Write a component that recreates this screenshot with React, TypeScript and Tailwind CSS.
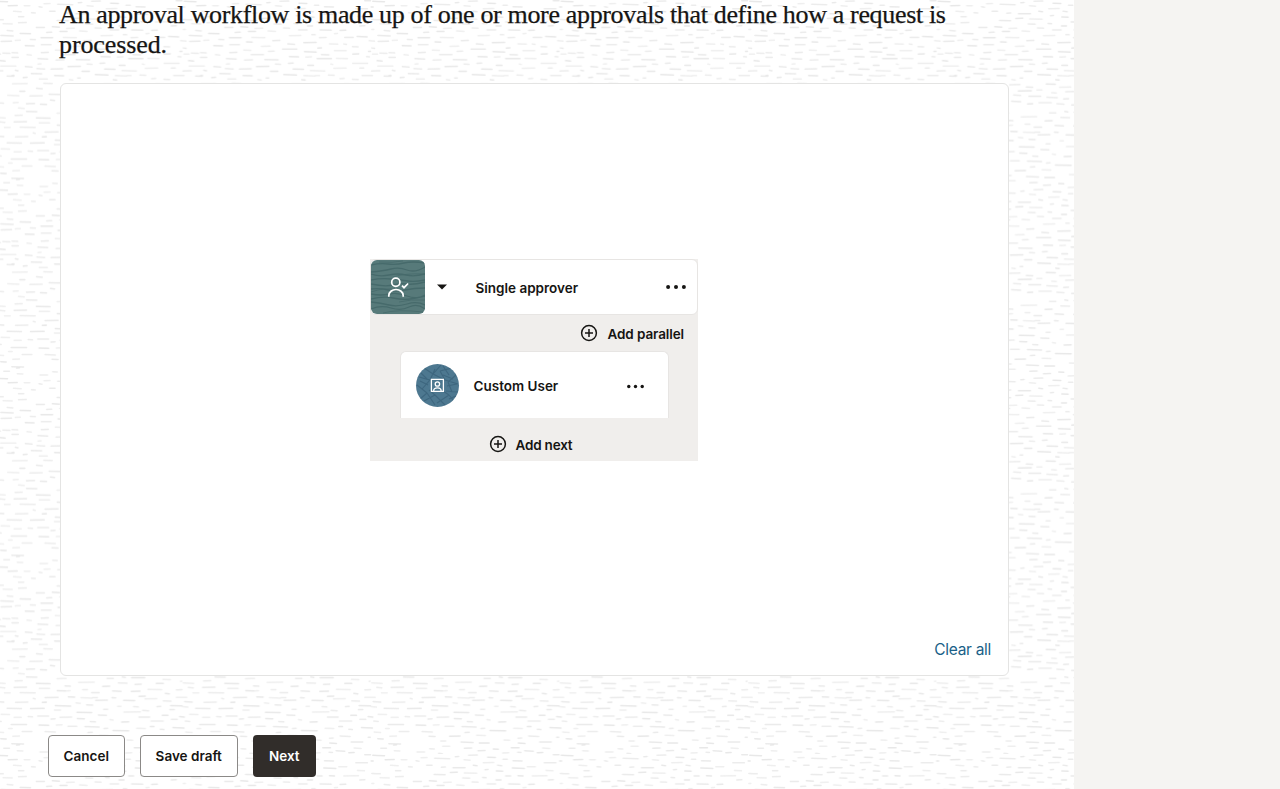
const TILE = 188.5;

type Dash = [x: number, width: number, y: number];

type Patch = { left: number; top: number; dashes: Dash[] };

// Dash coordinates are in thirds of a pixel, relative to the patch origin.
const patches: Patch[] = [
  {
    left: 600,
    top: 674,
    dashes: [
      [66, 30, 14], [216, 22, 13], [262, 12, 9], [290, 42, 11], [384, 25, 16], [506, 24, 21], [540, 34, 9],
      [4, 44, 28], [131, 50, 25], [250, 29, 27], [300, 22, 31], [364, 24, 28], [445, 34, 27], [437, 6, 22],
      [90, 19, 36], [203, 24, 37], [13, 34, 43], [460, 18, 40], [503, 40, 40],
      [67, 28, 50], [95, 13, 51], [143, 17, 47], [233, 28, 51], [289, 29, 52], [339, 44, 46], [424, 20, 48],
      [170, 25, 56], [391, 15, 58], [474, 20, 57], [521, 48, 56],
      [30, 42, 71], [100, 22, 69], [138, 36, 71], [173, 17, 71], [231, 14, 71], [312, 22, 67], [424, 34, 70], [560, 9, 73],
      [182, 38, 79], [266, 36, 79], [330, 38, 75], [385, 26, 81], [449, 26, 83],
      [22, 15, 85], [123, 16, 87], [507, 40, 85], [155, 21, 93],
      [61, 49, 95], [248, 13, 97], [296, 17, 98], [366, 14, 98], [407, 37, 95], [443, 19, 98],
      [206, 15, 106], [482, 46, 103], [552, 44, 104], [58, 22, 108], [323, 21, 109], [405, 16, 107],
      [126, 47, 115], [267, 52, 114],
      [8, 36, 126], [190, 27, 123], [382, 20, 124], [464, 28, 121],
      [75, 38, 130], [312, 35, 129], [434, 17, 128], [503, 24, 130], [545, 16, 128],
      [48, 15, 135], [127, 24, 134], [225, 12, 137], [409, 21, 136],
      [166, 18, 143], [260, 24, 144], [348, 40, 141], [451, 16, 141], [494, 49, 152],
      [12, 32, 153], [64, 20, 153], [99, 29, 157], [150, 45, 158], [346, 14, 158],
      [305, 29, 163], [207, 14, 164], [376, 14, 166], [414, 36, 161], [486, 14, 164],
      [30, 34, 173], [159, 16, 176], [234, 50, 170], [452, 22, 174], [527, 32, 173],
      [51, 21, 187], [113, 34, 187], [194, 29, 184], [350, 33, 186], [434, 9, 190], [463, 19, 194], [499, 23, 187],
      [86, 18, 201], [147, 39, 204], [202, 32, 207], [276, 20, 198], [318, 14, 193], [383, 38, 204], [319, 23, 207],
      [92, 24, 217], [53, 17, 224], [157, 25, 223], [298, 26, 221], [392, 24, 222], [472, 20, 223], [496, 38, 209], [510, 12, 213],
      [15, 26, 234], [80, 14, 238], [198, 24, 230], [244, 18, 225], [272, 21, 237], [317, 13, 235], [338, 29, 230], [376, 19, 236], [512, 20, 230],
      [170, 29, 244], [424, 20, 242], [448, 38, 244],
      [27, 21, 251], [68, 48, 253], [130, 13, 248], [227, 26, 250], [156, 21, 257], [273, 16, 256], [303, 30, 260], [485, 30, 257], [533, 20, 257],
      [12, 12, 260], [44, 19, 274], [184, 14, 274], [214, 34, 266], [397, 38, 266], [257, 15, 274], [443, 9, 261], [501, 26, 274],
      [88, 15, 280], [123, 39, 281], [301, 39, 282], [346, 27, 278], [555, 14, 278],
      [219, 12, 287], [253, 22, 291], [402, 24, 289], [516, 19, 290],
      [66, 36, 301], [115, 24, 295], [157, 40, 297], [445, 28, 298], [281, 18, 306], [318, 18, 305], [361, 47, 306],
      [152, 24, 312], [212, 13, 310], [252, 18, 318], [470, 30, 311], [516, 26, 308],
      [4, 27, 322], [52, 24, 320], [95, 26, 325], [180, 21, 324], [409, 18, 318],
      [75, 24, 334], [134, 25, 333], [225, 29, 330], [290, 36, 330], [350, 20, 331], [445, 9, 328], [482, 20, 331],
      [35, 18, 337], [521, 34, 340], [333, 12, 341],
    ],
  },
  {
    left: 200,
    top: 26,
    dashes: [
      [267, 37, 29], [334, 13, 26], [532, 40, 28],
      [87, 38, 35], [154, 42, 34], [357, 23, 35], [433, 28, 34], [470, 33, 31],
      [10, 18, 43], [55, 18, 40], [217, 24, 44], [138, 20, 48], [506, 19, 44],
      [88, 32, 56], [262, 23, 54], [310, 40, 50], [387, 28, 54], [430, 11, 54], [533, 34, 46],
      [40, 29, 59], [183, 29, 61], [456, 20, 62], [514, 11, 66], [352, 14, 66],
      [130, 24, 72], [204, 20, 76], [246, 46, 69], [312, 38, 77], [402, 38, 74],
      [0, 20, 80], [88, 24, 80], [504, 9, 76], [45, 16, 86], [152, 40, 86], [363, 25, 86], [457, 21, 84], [516, 18, 84], [538, 24, 81],
      [0, 22, 94], [267, 30, 92], [316, 20, 93], [498, 12, 92],
      [78, 32, 98], [350, 46, 98], [408, 36, 97], [132, 27, 102], [193, 43, 101], [530, 18, 104],
      [78, 12, 114], [225, 18, 114], [264, 17, 112], [322, 20, 118], [391, 9, 114], [457, 47, 112],
      [40, 23, 122], [168, 40, 122], [532, 48, 120],
      [75, 26, 128], [117, 38, 129], [278, 34, 129], [400, 40, 127], [478, 15, 126],
      [10, 11, 133], [210, 25, 136], [330, 46, 134], [513, 28, 135],
      [58, 34, 143], [250, 41, 146], [345, 15, 149], [384, 20, 147],
      [0, 9, 149], [128, 30, 149], [310, 36, 149], [485, 34, 149], [551, 23, 150],
      [34, 14, 155], [82, 27, 159], [172, 13, 161], [197, 11, 156], [304, 13, 161], [419, 15, 158], [456, 20, 160],
    ],
  },
  {
    left: 0,
    top: 80,
    dashes: [
      [36, 47, 11], [130, 28, 10], [108, 20, 25], [58, 18, 34], [22, 36, 46], [88, 40, 48], [146, 40, 43],
      [150, 15, 60], [38, 18, 68], [0, 12, 69], [78, 27, 71], [120, 21, 73], [54, 20, 84],
      [200, 34, 14], [250, 22, 21], [226, 42, 33], [282, 18, 30], [212, 24, 45], [258, 38, 49],
      [310, 30, 12], [350, 36, 22], [418, 22, 15], [466, 34, 12], [520, 24, 19],
      [326, 17, 38], [368, 28, 35], [410, 40, 41], [470, 18, 33], [505, 40, 39],
      [312, 34, 52], [362, 18, 57], [400, 26, 59], [448, 42, 54], [514, 22, 57],
      [206, 30, 64], [254, 18, 72], [288, 40, 68], [342, 24, 71], [386, 38, 75], [440, 18, 71], [476, 34, 70], [528, 20, 75],
    ],
  },
];

const wrap = (v: number) => ((v % TILE) + TILE) % TILE;

const strokes = patches.flatMap((p) =>
  p.dashes.map(([x, width, y], i) => ({
    x: wrap(p.left + x / 3) + 0.5,
    y: wrap(p.top + y / 3),
    w: width / 3 - 1,
    tilt: ((i * 7) % 5) * 0.18 - 0.25,
    o: 0.7 + ((i * 5) % 4) * 0.1,
  })),
);

function Texture() {
  return (
    <svg className="absolute inset-0 h-full w-full" aria-hidden="true">
      <defs>
        <pattern id="dashes" width={TILE} height={TILE} patternUnits="userSpaceOnUse">
          {strokes.map((d, i) => (
            <g key={i} stroke="#e8e8e8" strokeWidth="1.5" strokeLinecap="round" opacity={d.o}>
              <path d={`M${d.x} ${d.y}l${d.w} ${d.tilt}`} />
              {d.x + d.w > TILE && <path d={`M${d.x - TILE} ${d.y}l${d.w} ${d.tilt}`} />}
            </g>
          ))}
        </pattern>
      </defs>
      <rect width="100%" height="100%" fill="url(#dashes)" />
    </svg>
  );
}

function PlusCircle() {
  return (
    <svg width="18" height="18" viewBox="0 0 18 18" fill="none" stroke="#161513" strokeWidth="1.5">
      <circle cx="9" cy="9" r="7.4" />
      <path d="M9 5v8M5 9h8" />
    </svg>
  );
}

function Dots({ size }: { size: number }) {
  return (
    <svg width={size} height={size} viewBox="0 0 20 20" fill="#161513">
      <circle cx="2.1" cy="10" r="2" />
      <circle cx="10" cy="10" r="2" />
      <circle cx="17.9" cy="10" r="2" />
    </svg>
  );
}

function ApproverTile() {
  return (
    <svg width="54" height="54" viewBox="0 0 54 54" fill="none" className="shrink-0 rounded-[6px] bg-[#587b7b]">
      <g stroke="#446869" strokeWidth="1.3" opacity="0.85">
        <path d="M0 5q9-2 17-1t16-1 21 0M0 12q12-1 20-3t16 1 18-3M0 14q9 3 18 1t17 0 19-1M0 20q10-2 20-1t17 2 17-1M0 24q14 3 22 1t14-1 18-2M0 29q9-1 17 1t17 0 20-2M0 34q10 2 18 0t18 2 18-1M0 39q12-3 22-1t17 1 15-3M0 42q10 1 18 3t18-1 18 1M0 49q10-4 20-1t18-1 16 2" />
        <path d="M8 2q14 1 24-1M22 17q12-4 32-3M0 32q14-5 26-2M28 42q12-3 26-2M12 53q14-4 40-1" strokeWidth=".8" />
      </g>
      <g stroke="#fff" strokeWidth="1.7">
        <circle cx="24.8" cy="22.3" r="4.1" />
        <path d="M17.8 36.7v-1.2a7.2 6 0 0 1 14.4 0v1.2M31 25.7l2 2 4.1-4.2" />
      </g>
    </svg>
  );
}

function UserBadge() {
  return (
    <svg width="43" height="43" viewBox="0 0 43 43" fill="none" className="shrink-0 rounded-full bg-[#4e7890]">
      <g stroke="#3b637b" strokeWidth="1.1" opacity="0.8">
        <path d="M3 13l11 3 5-11M8 4l9 6 8-9M14 16l-8 9M1 21l10 8M11 29l-7 6M11 29l8 12M8 37l11-6M19 31l10 10M21 39l12-8M33 31l-6-4M33 31l5 6M30 27l12 1M36 28l-4-10M42 20l-13-4M32 18l8-7M29 16l-5-9M24 7l12-3M27 11l10 4" />
        <path d="M5 9l6 6M17 10l12 6M12 21l-8-4M13 26l6 5M31 22l10-2M33 35l7-3M27 2l6 9" />
      </g>
      <g stroke="#fff" strokeWidth="1.3">
        <path d="M15.4 15.4h12v12h-12z" />
        <circle cx="21.4" cy="20" r="2.2" />
        <path d="M17.7 27.4v-.6a3.7 3 0 0 1 7.4 0v.6" />
      </g>
    </svg>
  );
}

export default function App() {
  return (
    <div className="flex h-[789px] w-[1280px] overflow-hidden bg-[#f5f4f2] font-['Inter',sans-serif] text-[#161513]">
      <main className="relative isolate h-full w-[1074px] shrink-0 bg-white">
        <Texture />
        <div className="relative flex h-full flex-col">
          <h1 className="h-[83px] pl-[59px] font-['Liberation_Serif',serif] text-[26px] leading-[30px] tracking-[-0.34px] whitespace-nowrap [-webkit-text-stroke:0.25px_#161513]">
            An approval workflow is made up of one or more approvals that define how a request is
            <br />
            <span className="tracking-[-0.1px]">processed.</span>
          </h1>
          <section className="ml-[60px] flex h-[593px] w-[949px] shrink-0 flex-col rounded-[6px] border border-[#e4e4e3] bg-white">
            <div className="mt-[175px] ml-[309px] h-[202px] w-[328px] bg-[#f0eeec]">
              <div className="flex h-[56px] items-center rounded-[6px] border border-[#e7e5e3] bg-white">
                <ApproverTile />
                <svg width="10" height="6" viewBox="0 0 10 6" className="ml-[12px]">
                  <path d="M0 .5h10L5 5.5z" fill="#161513" />
                </svg>
                <span className="ml-[28.5px] flex-1 pt-[2px] text-[13.5px] font-semibold">Single approver</span>
                <span className="mr-[11px]"><Dots size={20} /></span>
              </div>
              <div className="flex h-[36px] items-center justify-end gap-[9px] pr-[14px] text-[13.5px] font-semibold">
                <PlusCircle />
                <span className="pt-[2px] tracking-[-0.1px]">Add parallel</span>
              </div>
              <div className="ml-[29.5px] flex h-[67px] w-[269px] items-center rounded-t-[6px] border border-b-0 border-[#e7e5e3] bg-white pl-[15px]">
                <UserBadge />
                <span className="ml-[15px] flex-1 pt-[3px] text-[13.5px] font-semibold">Custom User</span>
                <span className="mr-[24px] pt-[3px]"><Dots size={17} /></span>
              </div>
              <div className="flex h-[43px] items-center justify-center gap-[9px] pt-[9px] pr-[7px] text-[13.5px] font-semibold">
                <PlusCircle />
                <span className="pt-[2px] tracking-[-0.2px]">Add next</span>
              </div>
            </div>
            <button className="mt-auto mr-[17px] mb-[13px] self-end text-[15.5px] leading-6 tracking-[-0.3px] text-[#1a5f87]">Clear all</button>
          </section>
          <footer className="mt-[59px] ml-[48px] flex h-[42px] gap-[15px] text-[13.5px] font-semibold">
            <button className="w-[76.5px] rounded-[4px] border border-[#8b8987] bg-white">Cancel</button>
            <button className="w-[98.5px] rounded-[4px] border border-[#8b8987] bg-white">Save draft</button>
            <button className="w-[62.5px] rounded-[4px] bg-[#312d2a] text-white">Next</button>
          </footer>
        </div>
      </main>
    </div>
  );
}
